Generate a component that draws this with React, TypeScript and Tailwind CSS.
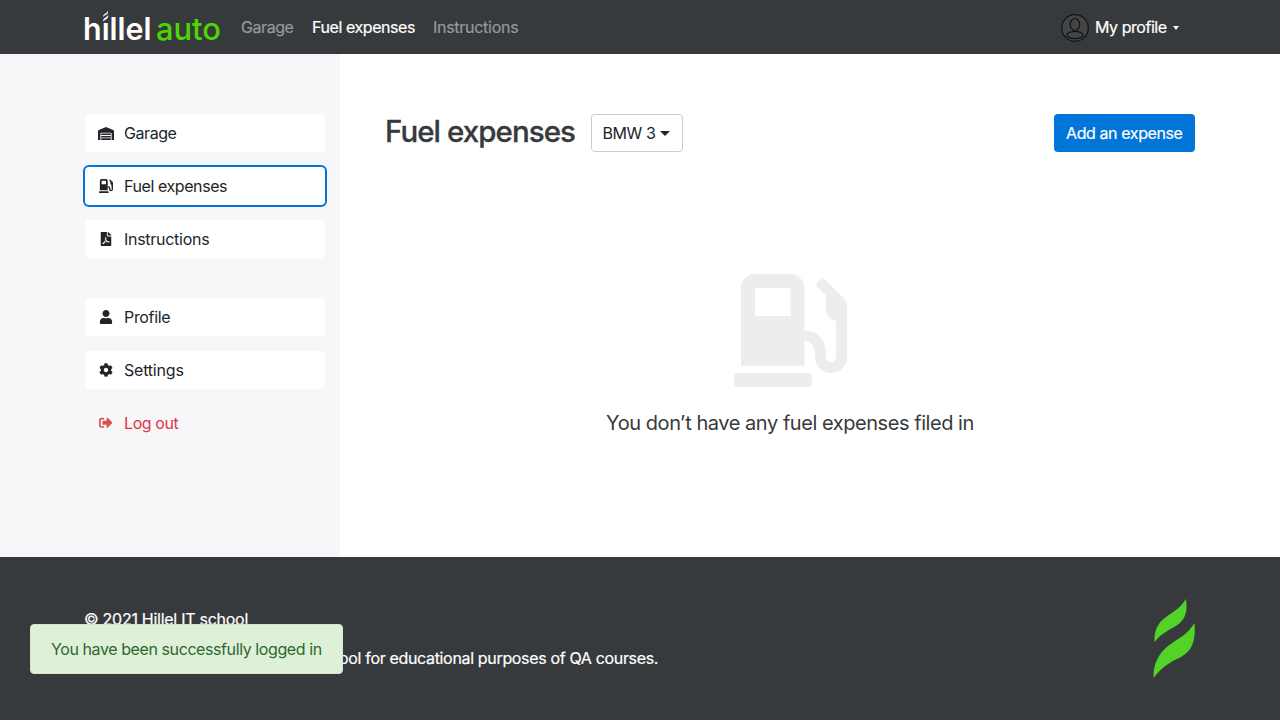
import type { ReactNode } from "react";
import { FaCog, FaFilePdf, FaSignOutAlt, FaUser, FaWarehouse } from "react-icons/fa";

function FuelPump({ className }: { className: string }) {
  return (
    <svg viewBox="0 0 339 339" className={className} fill="currentColor" aria-hidden="true">
      <path
        fillRule="evenodd"
        d="M21 275V42A42 42 0 0 1 63 0H169A42 42 0 0 1 211 42V275ZM63 42V126H170V42Z"
      />
      <rect x="0" y="297" width="234" height="42" rx="12" />
      <path
        d="M211 185A48 48 0 0 1 259 233V249A31.5 31.5 0 0 0 322.500 249V120"
        fill="none"
        stroke="currentColor"
        strokeWidth="32.500"
      />
      <path d="M249 38Q244 31 250 25L260 17Q268 12 275 18L326 69Q339 82 339 100V200H307V142C288 138 276 124 276 106V65Z" />
    </svg>
  );
}

function Logo() {
  return (
    <svg className="overflow-visible" width="136" height="32" viewBox="0 0 136 32" aria-label="hillel auto">
      <g fontFamily="Inter, sans-serif" fontSize="31" fontWeight="500">
        <text x="-2" y="30" textLength="68.500" fill="#fff" fontWeight="600" lengthAdjust="spacingAndGlyphs">
          hıllel
        </text>
        <text x="71" y="30" textLength="65" fill="#4dd600" lengthAdjust="spacingAndGlyphs">
          auto
        </text>
      </g>
      <path d="M18 6.800C18 3.500 22 4 22.800 0.500C24 4.500 20 5 18 6.800ZM18 11.500C18 7.500 22 8 23.200 4.800C24 9 20 9.500 18 11.500Z" fill="#fff" />
    </svg>
  );
}

function NavItem({ icon, label, tone = "plain", tracking }: { icon: ReactNode; label: string; tone?: "plain" | "active" | "danger"; tracking: string }) {
  const tones = {
    plain: "bg-white text-[#212529]",
    active: "bg-white text-[#212529] ring-2 ring-[#0275d8]",
    danger: "text-[#dc3545]",
  };
  return (
    <button className={`flex h-[38px] w-[240px] items-center rounded-[4px] pl-[13px] text-left ${tones[tone]}`}>
      <span className={`mr-[10px] flex w-4 justify-center ${tone === "danger" ? "text-[#d9534f]" : ""}`}>{icon}</span>
      <span className={tracking}>{label}</span>
    </button>
  );
}

export default function App() {
  return (
    <div className="relative flex h-[720px] w-[1280px] flex-col overflow-hidden bg-white font-['Inter',sans-serif] text-base leading-6 text-[#212529]">
      <header className="flex h-[54px] shrink-0 items-center bg-[#373a3c] px-[85px]">
        <div className="mb-[3px] w-[156px]">
          <Logo />
        </div>
        <nav className="flex grow gap-[18px] text-[#97999a] [-webkit-text-stroke:0.2px]">
          <a className="w-[53px] whitespace-nowrap tracking-[-0.44px]">Garage</a>
          <a className="w-[103px] whitespace-nowrap tracking-[-0.43px] text-white">Fuel expenses</a>
          <a className="whitespace-nowrap tracking-[-0.28px]">Instructions</a>
        </nav>
        <button className="mr-4 flex items-center text-white">
          <svg className="mt-px" width="28" height="28" viewBox="0 0 28 28" fill="#444546" stroke="#111314" strokeWidth="1.200" aria-hidden="true">
            <circle cx="14" cy="14" r="13.300" />
            <ellipse cx="14" cy="10.500" rx="4.800" ry="6" />
            <path d="M6 21C6 18.800 10 17.300 14 17.300S22 18.800 22 21S18 24.700 14 24.700S6 23.200 6 21Z" />
          </svg>
          <span className="ml-[6px] w-[72px] whitespace-nowrap text-left tracking-[-0.45px] [-webkit-text-stroke:0.2px]">My profile</span>
          <svg className="mt-[2px] ml-[6px]" width="6" height="4" viewBox="0 0 6 4" fill="currentColor" aria-hidden="true">
            <path d="M0 0H6L3 4Z" />
          </svg>
        </button>
      </header>

      <div className="flex h-[503px] shrink-0">
        <aside className="flex w-[340px] flex-col gap-[15px] bg-[#f7f7f9] pt-[60px] pl-[85px]">
          <NavItem icon={<FaWarehouse className="h-[13px] w-4" />} label="Garage" tracking="tracking-[-0.44px]" />
          <NavItem icon={<FuelPump className="size-[14px]" />} label="Fuel expenses" tone="active" tracking="tracking-[-0.42px]" />
          <NavItem icon={<FaFilePdf className="size-[14px]" />} label="Instructions" tracking="tracking-[-0.28px]" />
          <div className="mt-[25px] flex flex-col gap-[15px]">
            <NavItem icon={<FaUser className="size-[14px]" />} label="Profile" tracking="tracking-[-0.34px]" />
            <NavItem icon={<FaCog className="size-[14px]" />} label="Settings" tracking="tracking-[-0.2px]" />
            <NavItem icon={<FaSignOutAlt className="size-[13.5px]" />} label="Log out" tone="danger" tracking="tracking-[-0.42px]" />
          </div>
        </aside>
        <main className="flex grow flex-col pt-[60px] pr-[85px] pl-[45px]">
          <div className="flex h-[38px] items-center">
            <h1 className="-mt-[4px] w-[205.5px] whitespace-nowrap text-[29.5px] font-medium leading-9 tracking-[-0.95px] text-[#373a3c] [-webkit-text-stroke:0.3px]">Fuel expenses</h1>
            <button className="flex h-[38px] w-[92px] items-center rounded-[4px] border border-[#ccc] pl-[11px]">
              <span className="w-[54px] whitespace-nowrap text-left tracking-[-0.4px]">BMW 3</span>
              <svg className="ml-[3px]" width="10" height="5" viewBox="0 0 10 5" fill="currentColor" aria-hidden="true">
                <path d="M0 0H10L5 5Z" />
              </svg>
            </button>
            <button className="ml-auto flex h-[38px] w-[141.5px] items-center justify-center rounded-[4px] bg-[#0275d8] whitespace-nowrap tracking-[-0.41px] text-white [-webkit-text-stroke:0.2px]">
              Add an expense
            </button>
          </div>
          <div className="mt-[122px] flex flex-col items-center">
            <FuelPump className="size-[113px] text-[#ebedef]" />
            <p className="mt-[21px] text-[20px] leading-[30px] whitespace-nowrap tracking-[-0.45px] text-[#373a3c]">You don’t have any fuel expenses filed in</p>
          </div>
        </main>
      </div>

      <footer className="flex h-[163px] shrink-0 justify-between bg-[#373a3c] pr-[84px] pl-[84px] pt-[42px] text-white">
        <div className="flex flex-col gap-[15px] pt-2 whitespace-nowrap [-webkit-text-stroke:0.2px]">
          <p className="tracking-[-0.27px]">© 2021 Hillel IT school</p>
          <p className="tracking-[-0.335px]">Hillel auto developed in Hillel IT school for educational purposes of QA courses.</p>
        </div>
        <svg width="43" height="80" viewBox="0 0 43 80" fill="#53d327" aria-hidden="true">
          <path d="M33 0C35 13 32 21 23 27C14 32 8 35 1.500 43C1 33 4 24 13 18C22 12 28 8 33 0Z" />
          <path d="M41.500 24C43 44 38 52 28 58C17 63 9 68 .5 79C0 66 5 55 15 47C27 38 34 36 41.500 24Z" />
        </svg>
      </footer>

      <div role="alert" className="absolute top-[624px] left-[30px] flex h-[50px] w-[312.5px] items-center rounded-[4px] border border-[#d0e9c6] bg-[#dff0d8] pl-[20px] whitespace-nowrap tracking-[-0.41px] text-[#2d672d]">
        You have been successfully logged in
      </div>
    </div>
  );
}
